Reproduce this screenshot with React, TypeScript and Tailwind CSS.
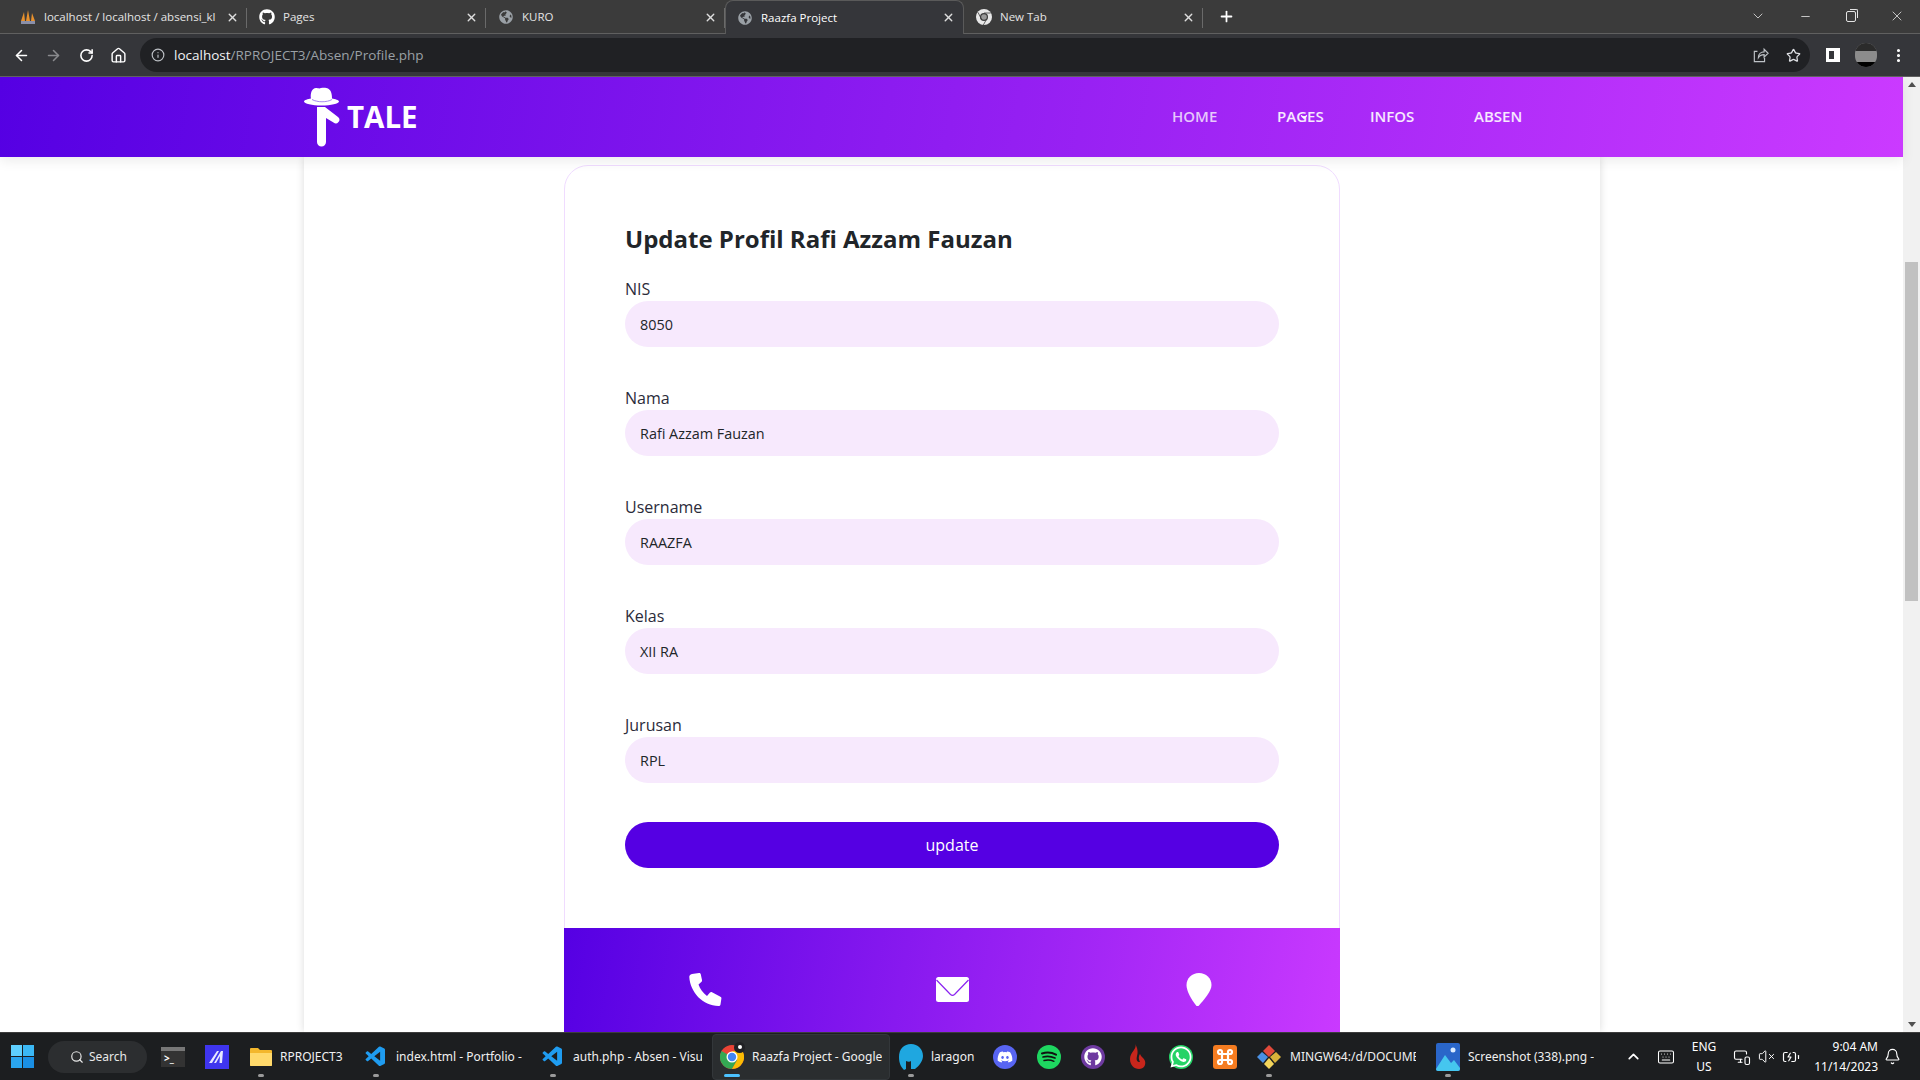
import React from 'react';
import {
  ArrowLeft, ArrowRight, RotateCw, Home, Info, Star, MoreVertical, X, Plus, ChevronDown, Minus,
  Search, ChevronUp, Keyboard, VolumeX, BatteryCharging, Bell, MonitorSmartphone,
} from 'lucide-react';
import { FaGithub, FaDiscord, FaWhatsapp, FaGlobeAmericas } from 'react-icons/fa';
import { VscVscode } from 'react-icons/vsc';

const tabs = [
  { title: 'localhost / localhost / absensi_kl', icon: 'pma' },
  { title: 'Pages', icon: 'github' },
  { title: 'KURO', icon: 'globe' },
  { title: 'Raazfa Project', icon: 'globe', active: true },
  { title: 'New Tab', icon: 'chrome' },
];

const fields = [
  { label: 'NIS', value: '8050' },
  { label: 'Nama', value: 'Rafi Azzam Fauzan' },
  { label: 'Username', value: 'RAAZFA' },
  { label: 'Kelas', value: 'XII RA' },
  { label: 'Jurusan', value: 'RPL' },
];

const ChromeIcon = ({ size = 16 }: { size?: number }) => (
  <svg width={size} height={size} viewBox="0 0 24 24">
    <circle cx="12" cy="12" r="12" fill="#ea4335" />
    <path d="M12 12 1.6 6A12 12 0 0 0 12 24l5.2-9z" fill="#34a853" />
    <path d="M12 6h10.4A12 12 0 0 1 12 24l5.2-9z" fill="#fbbc04" />
    <circle cx="12" cy="12" r="5.5" fill="#fff" />
    <circle cx="12" cy="12" r="4.2" fill="#4285f4" />
  </svg>
);

const GrayChrome = () => (
  <svg width="16" height="16" viewBox="0 0 24 24">
    <circle cx="12" cy="12" r="12" fill="#e8e8e8" />
    <circle cx="12" cy="12" r="6" fill="#3c3c3c" />
    <circle cx="12" cy="12" r="4.2" fill="#9a9a9a" />
    <path d="M12 6h10M8 15 3 5M16 15l-5 9" stroke="#3c3c3c" strokeWidth="1.2" />
  </svg>
);

const PmaIcon = () => (
  <svg width="16" height="16" viewBox="0 0 16 16">
    <path d="M1 12 4 3l1 9zM6 12l2-11 2 11zM11 12l1-8 3 8z" fill="#e8912d" />
    <rect x="1" y="12" width="14" height="3" fill="#8a8fa8" />
  </svg>
);

const ShareIcon = () => (
  <svg width="16" height="16" viewBox="0 0 18 18" fill="none" stroke="#bdc1c6" strokeWidth="1.3">
    <path d="M5 5H1.5v11.5h11.5V12" />
    <path d="M6 12c0-4 3-6.5 6.5-6.5V2.5l4.5 4.5-4.5 4.5V8.5C10 8.500 7.500 9.500 6 12z" />
  </svg>
);

const TabIcon = ({ icon }: { icon: string }) => {
  if (icon === 'pma') return <PmaIcon />;
  if (icon === 'github') return <FaGithub size={16} className="text-white" />;
  if (icon === 'chrome') return <GrayChrome />;
  return <FaGlobeAmericas size={14} className="text-[#9aa0a6] mx-px" />;
};

const Tab = ({ title, icon, active }: { title: string; icon: string; active?: boolean }) => (
  <div className={`w-[239px] h-[34px] shrink-0 relative flex items-center pr-[8px] gap-[8px] text-[11.5px] ${active ? 'pl-[11px] bg-[#35363a] rounded-t-[8px] border border-b-0 border-[#5a5a5a] text-white' : 'pl-[12px] text-[#e4e4e4]'}`}>
    <TabIcon icon={icon} />
    <span className="flex-1 overflow-hidden whitespace-nowrap pr-[4px]">{title}</span>
    <X size={13} strokeWidth={2.5} className="text-[#dedede]" />
    {!active && <span className="absolute right-0 top-[8px] h-[20px] w-px bg-[#6a6a6a]" />}
  </div>
);

const BrowserBar = () => (
  <div className="font-['Open_Sans',sans-serif] shrink-0">
    <div className="h-[34px] bg-[#3b3b3b] border-b border-[#606060] flex items-start pl-[8px]">
      {tabs.map((t) => <Tab key={t.title} {...t} />)}
      <Plus size={17} strokeWidth={2.5} className="text-white mt-[8px] ml-[15px] shrink-0" />
      <div className="flex-1" />
      <div className="flex items-center text-[#e4e4e4] h-[32px] shrink-0">
        <ChevronDown size={16} strokeWidth={1.2} className="mr-[16px]" />
        <div className="w-[46px] flex justify-center"><Minus size={13} strokeWidth={1.5} /></div>
        <div className="w-[46px] flex justify-center">
          <div className="relative w-[10px] h-[11px] border border-[#e4e4e4] rounded-[2px]">
            <span className="absolute -top-[3px] -right-[3px] w-[8px] h-[9px] border-t border-r border-[#e4e4e4] rounded-tr-[2px]" />
          </div>
        </div>
        <div className="w-[46px] flex justify-center"><X size={16} strokeWidth={1.2} /></div>
      </div>
    </div>
    <div className="h-[43px] bg-[#35363a] border-b border-[#606060] flex items-center">
      <ArrowLeft size={17} strokeWidth={2.2} className="text-white ml-[13px]" />
      <ArrowRight size={17} strokeWidth={2.2} className="text-[#8a8b8e] ml-[15px]" />
      <RotateCw size={15} strokeWidth={2.5} className="text-white ml-[17px]" />
      <Home size={17} strokeWidth={2} className="text-white ml-[16px]" />
      <div className="ml-[13px] w-[1670px] h-[34px] rounded-full bg-[#202124] flex items-center pl-[11px] pr-[9px]">
        <Info size={14} className="text-[#bdc1c6]" />
        <span className="ml-[9px] text-[13.5px] text-[#f1f3f4]">localhost<span className="text-[#9aa0a6]">/RPROJECT3/Absen/Profile.php</span></span>
        <div className="flex-1" />
        <div className="mr-[17px]"><ShareIcon /></div>
        <Star size={15} strokeWidth={2} className="text-[#dfe1e5]" />
      </div>
      <div className="ml-[16px] w-[14px] h-[14px] border-[3px] border-r-[6px] border-white bg-[#35363a]" />
      <div className="ml-[15px] w-[22px] h-[24px] rounded-full overflow-hidden bg-[#8c8c8c] flex flex-col">
        <div className="h-[8px] bg-[#2b2b2b]" />
        <div className="flex-1" />
        <div className="h-[5px] bg-black" />
      </div>
      <MoreVertical size={17} strokeWidth={2.4} className="text-white ml-[13px]" />
    </div>
  </div>
);

const Logo = () => (
  <div className="w-[868px] shrink-0 flex items-center">
    <svg width="36" height="60" viewBox="0 0 36 60">
      <path d="M7 12C6 6 8 1 12 1c2 0 3 1 5 0 4-1 9 0 10 4 1 3 1 5 1 8-6 2-15 2-21-1z" fill="#fff" />
      <path d="M0 14.500C0 13 4 12 7 11.500c5 3 16 3 21 0 3 .5 7 1.500 7 3 0 2-8 4-17.500 4S0 16.500 0 14.500z" fill="#fff" />
      <path d="M8 12.500c5 3 15 3 20 0" stroke="#a98cf0" strokeWidth="1" fill="none" />
      <path d="M13 20h8l13 10a3.500 3.500 0 0 1-4.500 5.500L22 31v24a4.500 4.500 0 0 1-9 0z" fill="#fff" />
    </svg>
    <span className="text-white text-[29.5px] leading-none font-bold ml-[7px]">TALE</span>
  </div>
);

const NavBar = () => (
  <div className="relative z-10 h-[80px] shrink-0 bg-[linear-gradient(100deg,#5500e3,#cb3aff)] shadow-[0_4px_12px_rgba(0,0,0,0.08)] flex items-center pl-[304px]">
    <Logo />
    <nav className="flex text-[15px] font-semibold text-white/90 pb-[2px]">
      <span className="w-[105px] text-white/75">HOME</span>
      <span className="w-[93px] relative">
        PAGES
        <ChevronDown size={10} strokeWidth={3} className="absolute left-[22px] top-[7px] text-white" />
      </span>
      <span className="w-[104px]">INFOS</span>
      <span>ABSEN</span>
    </nav>
  </div>
);

const Field = ({ label, value }: { label: string; value: string }) => (
  <div className="mb-[39px]">
    <div className="text-[16px] leading-[24px] text-[#2b2b3a]">{label}</div>
    <div className="h-[46px] rounded-full bg-[#f7e9fd] flex items-center pl-[15px] pt-[1px] text-[14.4px] font-medium text-[#212529]">{value}</div>
  </div>
);

const PhoneIcon = () => (
  <svg width="33" height="33" viewBox="0 0 33 33">
    <path d="M3 1 10 0c1 0 1.500.5 1.700 1L13 7c.2 1 0 1.500-.7 2L9.500 11.500C11 16 14 20 18 23l3-3.500c.6-.5 1.200-.7 2-.3l8 4.300c1 .5 1.500 1 1.400 2l-.9 6c-.2 1-1 1.500-2 1.500C14 33 1 19 .3 4 .3 2.500 1 1.500 3 1z" fill="#fff" />
  </svg>
);

const MailIcon = () => (
  <svg width="33" height="25" viewBox="0 0 33 25">
    <rect width="33" height="25" rx="2.500" fill="#fff" />
    <path d="M.5 3 14.500 17.500c1.200 1 2.800 1 4 0L32.500 3" stroke="#8a22f0" strokeWidth="1.200" fill="none" />
  </svg>
);

const PinIcon = () => (
  <svg width="26" height="33" viewBox="0 0 26 33">
    <path d="M13 0C6 0 .5 5 .5 12c0 6 5 15 10 21h2C18 27 25.500 18 25.500 12 25.500 5 20 0 13 0z" fill="#fff" />
  </svg>
);

const FooterCol = ({ icon, text }: { icon: React.ReactNode; text: string }) => (
  <div className="flex-1 flex flex-col items-center">
    <div className="h-[33px] flex items-center">{icon}</div>
    <span className="mt-[23px] whitespace-nowrap">{text}</span>
  </div>
);

const Footer = () => (
  <div className="bg-[linear-gradient(100deg,#5500e3,#cb3aff)] h-[160px] mx-[-1px] flex px-[18px] pt-[45px] text-white text-[16px]">
    <FooterCol icon={<PhoneIcon />} text="+62 812 3456" />
    <FooterCol icon={<MailIcon />} text="info@gmail.com" />
    <FooterCol icon={<PinIcon />} text="Jl. Bandung" />
  </div>
);

const ScrollBar = () => (
  <div className="w-[17px] shrink-0 bg-[#f1f1f1] flex flex-col items-center">
    <div className="mt-[5px] w-0 h-0 border-x-[4px] border-x-transparent border-b-[5px] border-b-[#505050]" />
    <div className="mt-[175px] w-[13px] h-[339px] bg-[#c1c1c1]" />
    <div className="flex-1" />
    <div className="mb-[5px] w-0 h-0 border-x-[4px] border-x-transparent border-t-[5px] border-t-[#505050]" />
  </div>
);

const Page = () => (
  <div className="flex-1 min-h-0 flex overflow-hidden font-['Open_Sans',sans-serif]">
    <div className="flex-1 min-w-0 flex flex-col">
      <NavBar />
      <div className="flex-1 min-h-0 overflow-hidden bg-white">
        <div className="w-[1296px] ml-[304px] h-full bg-white shadow-[0_0_8px_rgba(0,0,0,0.14)] pt-[8px]">
          <div className="w-[776px] ml-[260px] border border-[#f0dcff] rounded-t-[24px] bg-white">
            <div className="px-[60px] pt-[55px] pb-[60px]">
              <h1 className="text-[24px] leading-[36px] font-bold text-[#212529] mb-[20px]">Update Profil Rafi Azzam Fauzan</h1>
              {fields.map((f) => <Field key={f.label} {...f} />)}
              <div className="h-[46px] rounded-full bg-[#5500e3] text-white text-[16px] flex items-center justify-center">update</div>
            </div>
            <Footer />
          </div>
        </div>
      </div>
    </div>
    <ScrollBar />
  </div>
);

const Running = ({ wide, active, children }: { wide?: boolean; active?: boolean; children: React.ReactNode }) => (
  <div className="relative h-[40px] flex items-center justify-center shrink-0">
    {children}
    <span className={`absolute bottom-0 left-1/2 -translate-x-1/2 h-[3px] rounded-full ${active ? 'w-[16px] bg-[#4cc2ff]' : wide ? 'w-[6px] bg-[#9a9a9a]' : 'hidden'}`} />
  </div>
);

const Folder = () => (
  <svg width="22" height="20" viewBox="0 0 22 20">
    <path d="M0 2a1 1 0 0 1 1-1h7l2 2h11a1 1 0 0 1 1 1v14a1 1 0 0 1-1 1H1a1 1 0 0 1-1-1z" fill="#f3b72c" />
    <path d="M0 6h22v12a1 1 0 0 1-1 1H1a1 1 0 0 1-1-1z" fill="#ffd96b" />
  </svg>
);

const Code = () => <VscVscode size={24} className="text-[#1f9cf0]" />;

const Label = ({ w, children }: { w: string; children: React.ReactNode }) => (
  <span className={`${w} ml-[8px] overflow-hidden whitespace-nowrap text-[12px] text-[#f0f0f0]`}>{children}</span>
);

const Taskbar = () => (
  <div className="h-[48px] shrink-0 bg-[#1c1e20] border-t border-[#3d3d3d] flex items-center text-white font-['Noto_Sans',sans-serif]">
    <div className="ml-[11px] w-[23px] h-[23px] grid grid-cols-2 gap-[1px]">
      <span className="bg-[#5fd0ff]" /><span className="bg-[#3bb8f5]" /><span className="bg-[#2aa5ee]" /><span className="bg-[#1a8fe3]" />
    </div>
    <div className="ml-[14px] w-[99px] h-[32px] rounded-full bg-[#2c2e30] flex items-center pl-[22px] gap-[5px] text-[12px] text-[#e8e8e8]">
      <Search size={14} /> Search
    </div>
    <div className="ml-[14px] w-[24px] h-[20px] bg-[#333] border-t-[4px] border-[#777] flex items-center pl-[3px] text-[10px] font-bold">&gt;_</div>
    <svg className="ml-[20px]" width="24" height="24" viewBox="0 0 24 24">
      <rect width="24" height="24" fill="#3f35ee" />
      <path d="M4 18 12 6h2L7 18zM9 18l7-12h2l-1 12h-2.500l.5-7-4 7z" fill="#e8e8ff" />
    </svg>
    <div className="ml-[21px] flex items-center">
      <Running wide><Folder /></Running>
      <Label w="w-[66px]">RPROJECT3</Label>
    </div>
    <div className="ml-[18px] flex items-center">
      <Running wide><Code /></Running>
      <Label w="w-[126px]">index.html - Portfolio - V</Label>
    </div>
    <div className="ml-[19px] flex items-center">
      <Running wide><Code /></Running>
      <Label w="w-[129px]">auth.php - Absen - Visu</Label>
    </div>
    <div className="ml-[10px] w-[178px] h-[46px] rounded-[4px] bg-[#2a2d2f] border border-[#33373a] flex items-center pl-[7px]">
      <Running active>
        <ChromeIcon size={24} />
        <span className="absolute top-[5px] -right-[1px] w-[11px] h-[11px] rounded-full bg-[#202124] flex items-center justify-center">
          <span className="w-[4px] h-[4px] rounded-full bg-white" />
        </span>
      </Running>
      <Label w="w-[130px]">Raazfa Project - Google</Label>
    </div>
    <div className="ml-[9px] flex items-center">
      <Running wide>
        <svg width="24" height="28" viewBox="0 0 24 28"><path d="M12 1C5 1 0 6 0 14c0 6 2 10 5 13l2-1V18c2 1 4 1 5 0v8h4c4-3 8-8 8-13C24 6 19 1 12 1z" fill="#1fa7e0" /></svg>
      </Running>
      <Label w="w-[44px]">laragon</Label>
    </div>
    <div className="ml-[18px] w-[24px] h-[24px] rounded-full bg-[#5865f2] flex items-center justify-center"><FaDiscord size={16} /></div>
    <div className="ml-[20px] w-[24px] h-[24px] rounded-full bg-[#1ed760] flex items-center justify-center">
      <svg width="16" height="12" viewBox="0 0 16 12" fill="none" stroke="#111" strokeLinecap="round">
        <path d="M1 2.500c4-1.200 10-1 14 1.200" strokeWidth="2" />
        <path d="M2 6c3.500-1 8-.8 12 1" strokeWidth="1.700" />
        <path d="M3 9.500c3-.8 7-.6 10 .8" strokeWidth="1.400" />
      </svg>
    </div>
    <div className="ml-[20px] w-[24px] h-[24px] rounded-full bg-[#6e3aa0] flex items-center justify-center"><FaGithub size={18} /></div>
    <svg className="ml-[20px]" width="24" height="26" viewBox="0 0 24 26"><path d="M10 0c3 4-5 8-5 15 0 6 4 10 9 10 5 0 7-4 6-8-1-3-4-4-5-7-2 3-1 6 0 8-3 0-4-2-3-6 1-3 1-8-2-12z" fill="#c8261c" /></svg>
    <div className="ml-[20px] w-[24px] h-[24px] rounded-full bg-[#25d366] flex items-center justify-center"><FaWhatsapp size={24} /></div>
    <div className="ml-[20px] w-[24px] h-[24px] rounded-[3px] bg-[#f57c20] flex items-center justify-center">
      <svg width="18" height="18" viewBox="0 0 18 18" fill="none" stroke="#fff" strokeWidth="2.200">
        <path d="M6 6H4a2 2 0 1 1 2-2zM12 6h2a2 2 0 1 0-2-2zM6 12H4a2 2 0 1 0 2 2zM12 12h2a2 2 0 1 1-2 2zM6 6h6v6H6z" />
      </svg>
    </div>
    <div className="ml-[19px] flex items-center">
      <Running wide>
        <svg width="26" height="26" viewBox="0 0 26 26">
          <path d="M13 1 7 7l6 6 6-6z" fill="#e0493a" /><path d="m6 8-5 5 6 6 5-6z" fill="#4a90e2" />
          <path d="m20 8-6 5 5 6 6-6z" fill="#d9b23a" /><path d="m13 14-5 6 5 5 5-5z" fill="#f2d45c" />
        </svg>
      </Running>
      <Label w="w-[126px]">MINGW64:/d/DOCUMEI</Label>
    </div>
    <div className="ml-[20px] flex items-center">
      <Running wide>
        <svg width="24" height="28" viewBox="0 0 24 28">
          <rect width="24" height="28" rx="2" fill="#2a66c9" />
          <circle cx="17" cy="7" r="2.500" fill="#dcecff" />
          <path d="M0 26 9 12l6 8 3-3 6 8v1a2 2 0 0 1-2 2H2a2 2 0 0 1-2-2z" fill="#45c6ef" />
        </svg>
      </Running>
      <Label w="w-[126px]">Screenshot (338).png -</Label>
    </div>
    <ChevronUp size={17} strokeWidth={2.4} className="ml-[31px]" />
    <Keyboard size={18} strokeWidth={1.4} className="ml-[15px]" />
    <div className="ml-[15px] w-[28px] text-center text-[12px] leading-[20px]">ENG<br />US</div>
    <MonitorSmartphone size={18} strokeWidth={1.5} className="ml-[15px]" />
    <VolumeX size={17} strokeWidth={1.4} className="ml-[7px]" />
    <BatteryCharging size={18} strokeWidth={1.6} className="ml-[7px]" />
    <div className="ml-[11px] w-[67px] text-right text-[12px] leading-[20px]">9:04 AM<br />11/14/2023</div>
    <Bell size={17} strokeWidth={1.6} className="ml-[6px]" />
  </div>
);

export default function App() {
  return (
    <div className="w-[1920px] h-[1080px] flex flex-col overflow-hidden bg-white">
      <BrowserBar />
      <Page />
      <Taskbar />
    </div>
  );
}
